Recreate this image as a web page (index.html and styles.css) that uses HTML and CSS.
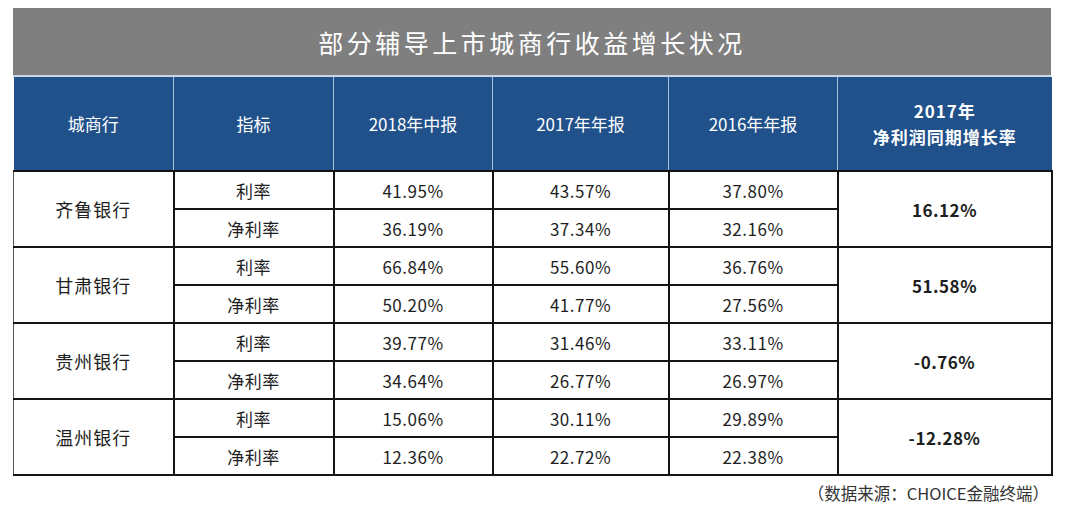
FILE: index.html
```html
<!DOCTYPE html>
<html lang="zh">
<head>
<meta charset="utf-8">
<link rel="stylesheet" href="styles.css">
</head>
<body>
<div class="wrap">
  <div class="title">部分辅导上市城商行收益增长状况</div>
  <table class="grid">
    <colgroup>
      <col style="width:160px"><col style="width:160px"><col style="width:159px"><col style="width:176px"><col style="width:169px"><col style="width:214px">
    </colgroup>
    <thead>
      <tr>
        <th>城商行</th>
        <th>指标</th>
        <th>2018年中报</th>
        <th>2017年年报</th>
        <th>2016年年报</th>
        <th class="bold">2017年<br>净利润同期增长率</th>
      </tr>
    </thead>
    <tbody>
      <tr><td rowspan="2" class="bank">齐鲁银行</td><td>利率</td><td>41.95%</td><td>43.57%</td><td>37.80%</td><td rowspan="2" class="growth">16.12%</td></tr>
      <tr><td>净利率</td><td>36.19%</td><td>37.34%</td><td>32.16%</td></tr>
      <tr><td rowspan="2" class="bank">甘肃银行</td><td>利率</td><td>66.84%</td><td>55.60%</td><td>36.76%</td><td rowspan="2" class="growth">51.58%</td></tr>
      <tr><td>净利率</td><td>50.20%</td><td>41.77%</td><td>27.56%</td></tr>
      <tr><td rowspan="2" class="bank">贵州银行</td><td>利率</td><td>39.77%</td><td>31.46%</td><td>33.11%</td><td rowspan="2" class="growth">-0.76%</td></tr>
      <tr><td>净利率</td><td>34.64%</td><td>26.77%</td><td>26.97%</td></tr>
      <tr><td rowspan="2" class="bank">温州银行</td><td>利率</td><td>15.06%</td><td>30.11%</td><td>29.89%</td><td rowspan="2" class="growth">-12.28%</td></tr>
      <tr><td>净利率</td><td>12.36%</td><td>22.72%</td><td>22.38%</td></tr>
    </tbody>
  </table>
  <div class="source">（数据来源：CHOICE金融终端）</div>
</div>
</body>
</html>
```
FILE: styles.css
```css
html, body {
  margin: 0;
  padding: 0;
  background: #ffffff;
}
body {
  font-family: "Noto Sans CJK SC", "Noto Sans", sans-serif;
  color: #1e1e1e;
}
.wrap {
  width: 1038px;
  margin: 8px 0 0 13px;
}
.title {
  height: 67px;
  background: #7f7f7f;
  color: #ffffff;
  font-size: 25px;
  letter-spacing: 3.5px;
  display: flex;
  align-items: center;
  justify-content: center;
  border-bottom: 2px solid #c9d6e6;
}
.grid {
  width: 1038px;
  border-collapse: collapse;
  table-layout: fixed;
}
.grid th {
  height: 93px;
  background: #21518b;
  color: #ffffff;
  font-weight: 400;
  font-size: 17px;
  line-height: 26px;
  border-left: 1px solid #a9bfdb;
  padding: 0;
}
.grid th:first-child {
  border-left: none;
}
.grid th.bold {
  font-weight: 700;
  letter-spacing: 1px;
}
.grid td {
  height: 36px;
  border: 2px solid #141414;
  text-align: center;
  font-size: 17px;
  padding: 0;
  letter-spacing: 0.5px;
}
.grid td.bank {
  font-size: 18px;
  letter-spacing: 1px;
  border-left: 1px solid #555555;
}
.grid td.growth {
  font-weight: 700;
  border-right: 2px solid #141414;
}
.source {
  text-align: right;
  padding-right: 2px;
  margin-top: 5px;
  font-size: 16.5px;
  color: #333333;
}
```
